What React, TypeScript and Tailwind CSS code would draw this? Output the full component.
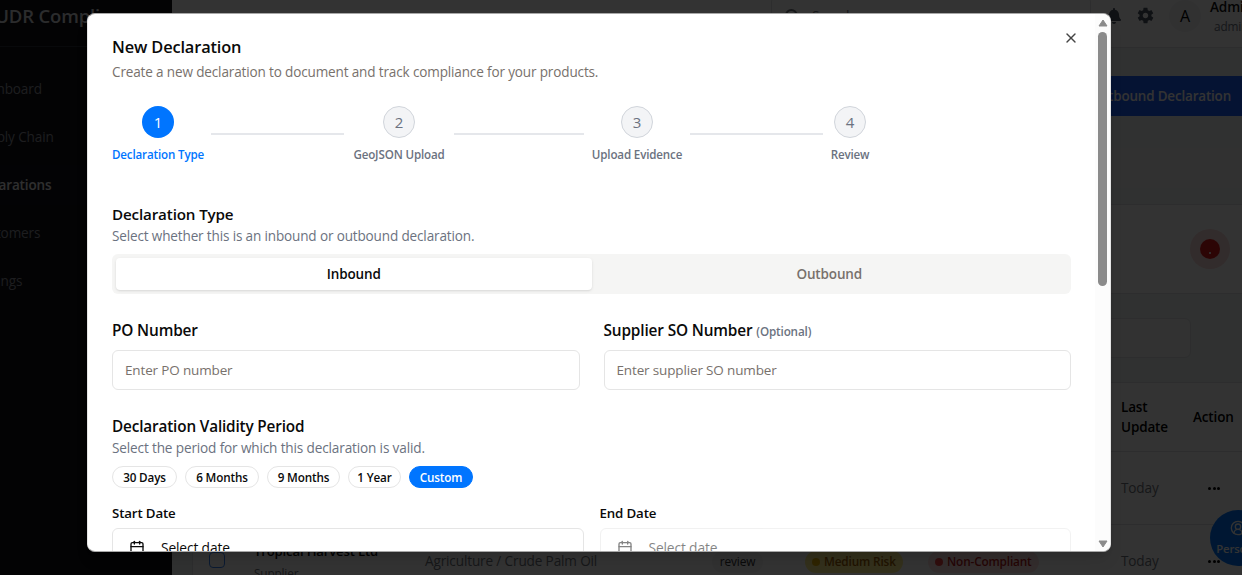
import React from "react";
import { Calendar, CircleUserRound, Search, X } from "lucide-react";
import { IoMdSettings } from "react-icons/io";
import { FaBell } from "react-icons/fa";

const navItems = [
  { label: "Dashboard", active: false },
  { label: "Supply Chain", active: false },
  { label: "Declarations", active: true },
  { label: "Customers", active: false },
  { label: "Settings", active: false },
];

function Sidebar() {
  return (
    <aside className="-ml-[84px] flex w-64 shrink-0 flex-col bg-[#0f1018]">
      <div className="flex h-[47px] shrink-0 items-center border-b border-[#2c2e38] pb-3.5 pl-[69px] text-[18.5px] font-semibold whitespace-nowrap text-[#d8dade]">
        EUDR Compliance
      </div>
      <nav className="flex flex-col gap-2 pt-[22px]">
        {navItems.map((item) => (
          <div
            key={item.label}
            className={
              item.active
                ? "flex h-10 items-center bg-[#12131b] pl-[55px] text-[13.5px] font-semibold text-[#e8e8ea]"
                : "flex h-10 items-center pl-[57px] text-[13.6px] font-medium text-[#90929b]"
            }
          >
            {item.label}
          </div>
        ))}
      </nav>
    </aside>
  );
}

function Header() {
  return (
    <header className="flex h-12 w-[1200px] shrink-0 border-b border-[#dfe2e4] bg-white pl-[599px]">
      <div className="-mt-1 flex h-10 w-80 shrink-0 items-center gap-3 rounded-md border border-[#dfe2e4] pl-3 text-[#71757c]">
        <Search className="size-4 shrink-0" strokeWidth={3} />
        <span className="text-[13.6px]">Search...</span>
      </div>
      <div className="flex h-[31px] items-center pl-[15px]">
        <FaBell className="size-4 text-[#4b5563]" />
        <IoMdSettings className="ml-[14px] size-[19px] text-[#4b5563]" />
        <div className="ml-[14px] flex size-8 items-center justify-center rounded-full bg-[#f3f4f6] text-[16px] text-black">
          A
        </div>
        <div className="ml-2 flex flex-col items-start whitespace-nowrap">
          <span className="pl-px text-[13.6px] leading-5 font-semibold text-[#111]">Admin User</span>
          <span className="pl-[5px] text-[11.8px] leading-[18px] text-[#6b7280]">admin</span>
        </div>
      </div>
    </header>
  );
}

function Row({ first }: { first?: boolean }) {
  return (
    <div className="flex h-[73px] shrink-0 items-center border-t border-[#dfe2e4] bg-white pt-px text-[13.6px] text-[#71757c]">
      <div className="w-[61px] shrink-0 pl-4">
        <div className="-mt-1 size-4 rounded border border-[#3b82f6]" />
      </div>
      <div className="w-[171px] shrink-0 text-[13.1px]">
        <div className="leading-5 font-semibold whitespace-nowrap text-[#111]">
          {first ? "Golden Palm Co" : "Tropical Harvest Ltd"}
        </div>
        <div className="mt-0.5 text-[11.8px] leading-5">Supplier</div>
      </div>
      <div className="w-[287px] shrink-0">Agriculture / Crude Palm Oil</div>
      <div className="w-[93px] shrink-0">
        <span className="inline-flex h-[22px] w-[51px] items-center justify-center rounded-full bg-[#f3f4f6] text-[11.9px] font-medium text-[#333]">
          review
        </span>
      </div>
      <div className="w-[123px] shrink-0">
        <span className="inline-flex h-[22px] w-[98px] items-center gap-1 rounded-full bg-[#fef08a] pl-[7px] text-[11.8px] font-semibold whitespace-nowrap text-[#a16207]">
          <i className="size-2 rounded-full bg-[#eab308]" />
          Medium Risk
        </span>
      </div>
      <div className="w-[193px] shrink-0">
        <span className="inline-flex h-[22px] w-[111px] items-center gap-1 rounded-full bg-[#fee2e2] pl-[7px] text-[11.8px] font-semibold whitespace-nowrap text-[#b91c1c]">
          <i className="size-2 rounded-full bg-[#ef4444]" />
          Non-Compliant
        </span>
      </div>
      <div className="w-[87px] shrink-0">Today</div>
      <div className="flex gap-[1.5px]">
        <i className="size-[3px] rounded-full bg-black" />
        <i className="size-[3px] rounded-full bg-black" />
        <i className="size-[3px] rounded-full bg-black" />
      </div>
    </div>
  );
}

function Page() {
  return (
    <div className="flex h-[575px] w-[1242px] overflow-hidden">
      <Sidebar />
      <main className="flex min-w-0 flex-1 flex-col overflow-hidden bg-[#f0f6f3]">
        <Header />
        <div className="mt-7 flex h-10 shrink-0 justify-end">
          <div className="flex w-60 items-center justify-end bg-[#1d5eff] pt-px pr-[11px] text-[13.4px] font-semibold text-white">
            Create Outbound Declaration
          </div>
        </div>
        <div className="mt-8 ml-5 h-10 shrink-0 bg-[#f4f4f4]" />
        <div className="mt-4 ml-5 flex h-[90px] shrink-0 items-center justify-end border-y border-[#dfe2e4] bg-white pr-3">
          <div className="flex size-10 items-center justify-center rounded-full bg-[#fbdada]">
            <div className="flex size-5 items-center justify-center rounded-full bg-[#dc1c1c] pt-2">
              <i className="size-0.5 bg-[#fbdada]" />
            </div>
          </div>
        </div>
        <div className="mt-6 ml-5 h-10 w-[999px] shrink-0 rounded-md border border-[#dfe2e4] bg-[#f7f8f8]" />
        <div className="mt-6 ml-5 flex w-[1080px] flex-col border-l border-[#dfe2e4]">
          <div className="flex h-[69px] shrink-0 items-center border-t border-[#dfe2e4] bg-white pl-[928px] text-[13.5px] leading-5 font-semibold text-black">
            <div className="w-[72px] shrink-0">
              Last
              <br />
              Update
            </div>
            <div>Action</div>
          </div>
          <Row first />
          <Row />
        </div>
      </main>
    </div>
  );
}

function Step({ n, label, width, active }: { n: number; label: string; width: string; active?: boolean }) {
  return (
    <div className={`flex shrink-0 flex-col items-center ${width}`}>
      <div
        className={
          active
            ? "flex size-8 items-center justify-center rounded-full bg-[#0075ff] pt-px text-[15px] text-white"
            : "flex size-8 items-center justify-center rounded-full border border-[#d1d5db] bg-[#f3f4f6] pt-px text-[15px] text-[#6b7280]"
        }
      >
        {n}
      </div>
      <div
        className={
          active
            ? "mt-[9px] -mb-px text-[11.6px] leading-4 font-[550] whitespace-nowrap text-[#0075ff]"
            : "mt-[9px] -mb-px text-[11.6px] leading-4 font-[550] whitespace-nowrap text-[#6b7280]"
        }
      >
        {label}
      </div>
    </div>
  );
}

function Pill({ label, width, active }: { label: string; width: string; active?: boolean }) {
  return (
    <button
      className={`flex h-[22px] items-center justify-center rounded-full border text-[11.7px] leading-4 font-semibold whitespace-nowrap ${width} ${
        active ? "border-[#0075ff] bg-[#0075ff] text-white" : "border-[#e5e5e5] bg-white text-[#0a0a0a]"
      }`}
    >
      {label}
    </button>
  );
}

function DateField({ label, disabled }: { label: string; disabled?: boolean }) {
  return (
    <div>
      <div className="text-[13.3px] leading-5 font-semibold">{label}</div>
      <div
        className={`mt-[5px] flex h-10 items-center gap-4 rounded-md border border-[#e5e5e5] px-4 text-[13.8px] ${
          disabled ? "opacity-50" : ""
        }`}
      >
        <Calendar className="size-4" />
        Select date
      </div>
    </div>
  );
}

function Dialog() {
  return (
    <div className="absolute top-[13px] left-[87px] flex h-[539px] w-[1024px] overflow-hidden rounded-lg border border-[#a8a8a8] border-x-[#e5e5e5] bg-white text-[#0a0a0a] shadow-lg">
      <div className="flex min-w-0 flex-1 flex-col overflow-hidden p-6 pb-0">
        <div className="flex shrink-0 justify-between">
          <h2 className="text-[16.4px] leading-[18px] font-semibold">New Declaration</h2>
          <X className="-mt-2 -mr-2 size-4 text-[#444]" strokeWidth={2} />
        </div>
        <p className="mt-1.5 text-[13.55px] leading-5 text-[#78716c]">
          Create a new declaration to document and track compliance for your products.
        </p>

        <div className="mt-6 flex shrink-0 items-center">
          <Step n={1} label="Declaration Type" width="w-[92px]" active />
          <div className="ml-[7px] h-0.5 w-[133px] bg-[#e5e7eb]" />
          <Step n={2} label="GeoJSON Upload" width="ml-2 w-[94px]" />
          <div className="ml-2 h-0.5 w-[130px] bg-[#e5e7eb]" />
          <Step n={3} label="Upload Evidence" width="ml-2 w-[90px]" />
          <div className="ml-2 h-0.5 w-[133px] bg-[#e5e7eb]" />
          <Step n={4} label="Review" width="ml-2 w-[38px]" />
        </div>

        <h3 className="mt-10 text-[15.2px] leading-6 font-semibold">Declaration Type</h3>
        <p className="text-[13.55px] leading-5 text-[#6b7280]">Select whether this is an inbound or outbound declaration.</p>
        <div className="mt-2 grid h-10 shrink-0 grid-cols-2 rounded-md bg-[#f5f5f4] p-1 text-[13.5px] font-semibold">
          <button className="rounded bg-white shadow-sm">Inbound</button>
          <button className="text-[#78716c]">Outbound</button>
        </div>

        <div className="mt-6 grid shrink-0 grid-cols-2 gap-6">
          <div>
            <div className="h-6 pt-px text-[15.4px] leading-6 font-semibold">PO Number</div>
            <input
              className="mt-2 block h-10 w-full rounded-md border border-[#e5e5e5] px-3 text-[13.5px] placeholder:text-[#78716c]"
              placeholder="Enter PO number"
            />
          </div>
          <div>
            <div className="h-6 pt-px text-[15.4px] leading-6 font-semibold">
              Supplier SO Number <span className="text-[11.7px] font-[550] text-[#6b7280]">(Optional)</span>
            </div>
            <input
              className="mt-2 block h-10 w-full rounded-md border border-[#e5e5e5] px-3 text-[13.5px] placeholder:text-[#78716c]"
              placeholder="Enter supplier SO number"
            />
          </div>
        </div>

        <h3 className="mt-6 text-[15.3px] leading-6 font-semibold">Declaration Validity Period</h3>
        <p className="text-[13.6px] leading-5 text-[#6b7280]">Select the period for which this declaration is valid.</p>
        <div className="mt-2 flex shrink-0 gap-2">
          <Pill label="30 Days" width="w-[65px]" />
          <Pill label="6 Months" width="w-[74px]" />
          <Pill label="9 Months" width="w-[73px]" />
          <Pill label="1 Year" width="w-[53px]" />
          <Pill label="Custom" width="w-16" active />
        </div>

        <div className="mt-[15px] grid shrink-0 grid-cols-2 gap-4">
          <DateField label="Start Date" />
          <DateField label="End Date" disabled />
        </div>
      </div>

      <div className="flex w-[15px] shrink-0 flex-col items-center bg-[#fcfcfc]">
        <svg className="mt-[5px] h-2 w-[10px] shrink-0" viewBox="0 0 10 8">
          <path d="M5 1 L9 7 H1 Z" fill="#8b8b8b" stroke="#8b8b8b" strokeLinejoin="round" />
        </svg>
        <div className="mt-[5px] h-[254px] w-[9px] shrink-0 rounded-full bg-[#8b8b8b]" />
        <div className="flex-1" />
        <svg className="mb-[3px] h-2 w-[10px] shrink-0" viewBox="0 0 10 8">
          <path d="M5 7 L9 1 H1 Z" fill="#8b8b8b" stroke="#8b8b8b" strokeLinejoin="round" />
        </svg>
      </div>
    </div>
  );
}

export default function App() {
  return (
    <div className="relative h-[575px] w-[1242px] overflow-hidden font-['Open_Sans','Noto_Sans',sans-serif] tracking-[-0.15px]">
      <Page />
      <div className="absolute top-[510px] left-[1210px] flex size-14 flex-col items-center rounded-full bg-[#0075ff] pt-[10px] text-white">
        <CircleUserRound className="size-4 shrink-0" strokeWidth={2} />
        <span className="mt-[5px] text-[11.3px] leading-4 font-semibold">Persona</span>
      </div>
      <div className="absolute inset-0 bg-black/80" />
      <Dialog />
    </div>
  );
}
